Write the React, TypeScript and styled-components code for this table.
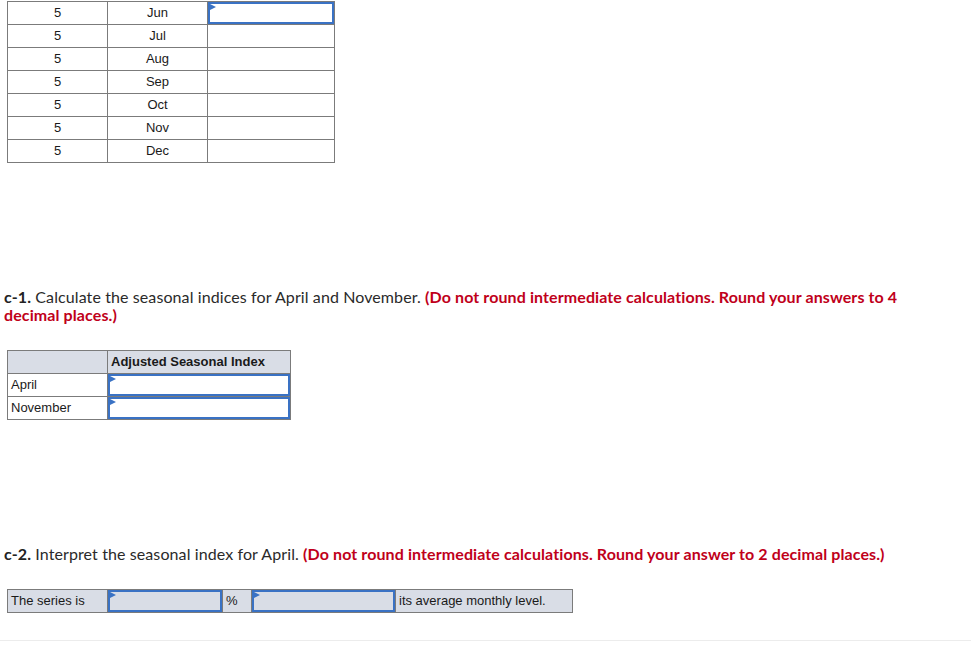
import styled, { createGlobalStyle } from "styled-components";

const GlobalStyle = createGlobalStyle`
  body {
    margin: 0;
    background: #fff;
    font-family: "Liberation Sans", Arial, sans-serif;
    color: #222;
  }
`;

const Page = styled.div`
  padding: 1px 0 0 0;
  width: 971px;
  height: 645px;
  overflow: hidden;
`;

const Section = styled.div`
  padding-left: 7px;
`;

const Grid = styled.div<{ $cols: string; $mt?: number }>`
  display: inline-grid;
  grid-template-columns: ${(p) => p.$cols};
  grid-auto-rows: 22px;
  gap: 1px;
  padding: 1px;
  background: #7b7b7b;
  margin-top: ${(p) => p.$mt ?? 0}px;
`;

const Cell = styled.div<{ $align?: string; $shade?: boolean; $bold?: boolean }>`
  background: ${(p) => (p.$shade ? "#d9dde6" : "#fff")};
  display: flex;
  align-items: center;
  justify-content: ${(p) => (p.$align === "center" ? "center" : "flex-start")};
  padding: 0 3px 1px;
  font-size: 13px;
  font-weight: ${(p) => (p.$bold ? 700 : 400)};
  color: #1a1a1a;
  white-space: nowrap;
`;

const InputCell = styled.div<{ $shade?: boolean }>`
  position: relative;
  background: ${(p) => (p.$shade ? "#d9dde6" : "#fff")};
  box-shadow: inset 0 0 0 2px #3a72c4;
`;

const Marker = styled.span`
  position: absolute;
  left: 2px;
  top: 2px;
  width: 0;
  height: 0;
  border-left: 6px solid #3a72c4;
  border-top: 3px solid transparent;
  border-bottom: 3px solid transparent;
`;

const Prompt = styled.p<{ $mt: number }>`
  margin: ${(p) => p.$mt}px 0 0 4px;
  width: 920px;
  font-family: Lato, "Open Sans", sans-serif;
  font-size: 16px;
  letter-spacing: 0.1px;
  line-height: 18px;
  color: #2a2a2a;
`;

const Label = styled.b`
  font-weight: 700;
  color: #222;
`;

const Hint = styled.b`
  font-weight: 700;
  color: #c0001a;
`;

const Rule = styled.div`
  margin-top: 27px;
  height: 1px;
  background: #ececec;
`;

const months = ["Jun", "Jul", "Aug", "Sep", "Oct", "Nov", "Dec"];

function Entry({ shade, marker }: { shade?: boolean; marker?: boolean }) {
  return <InputCell $shade={shade}>{marker && <Marker />}</InputCell>;
}

export default function App() {
  return (
    <Page>
      <GlobalStyle />
      <Section>
        <Grid $cols="99px 99px 126px">
          {months.map((m, i) => (
            <>
              <Cell key={m + "n"} $align="center">5</Cell>
              <Cell key={m} $align="center">{m}</Cell>
              {i === 0 ? <Entry key={m + "i"} marker /> : <Cell key={m + "e"} />}
            </>
          ))}
        </Grid>
      </Section>

      <Prompt $mt={125}>
        <Label>c-1.</Label> Calculate the seasonal indices for April and November.{" "}
        <Hint>(Do not round intermediate calculations. Round your answers to 4 decimal places.)</Hint>
      </Prompt>

      <Section>
        <Grid $cols="99px 182px" $mt={26}>
          <Cell $shade />
          <Cell $shade $bold>Adjusted Seasonal Index</Cell>
          <Cell>April</Cell>
          <Entry marker />
          <Cell>November</Cell>
          <Entry marker />
        </Grid>
      </Section>

      <Prompt $mt={125}>
        <Label>c-2.</Label> Interpret the seasonal index for April.{" "}
        <Hint>(Do not round intermediate calculations. Round your answer to 2 decimal places.)</Hint>
      </Prompt>

      <Section>
        <Grid $cols="99px 114px 28px 143px 176px" $mt={26}>
          <Cell $shade>The series is</Cell>
          <Entry shade marker />
          <Cell $shade>%</Cell>
          <Entry shade marker />
          <Cell $shade>its average monthly level.</Cell>
        </Grid>
      </Section>

      <Rule />
    </Page>
  );
}
